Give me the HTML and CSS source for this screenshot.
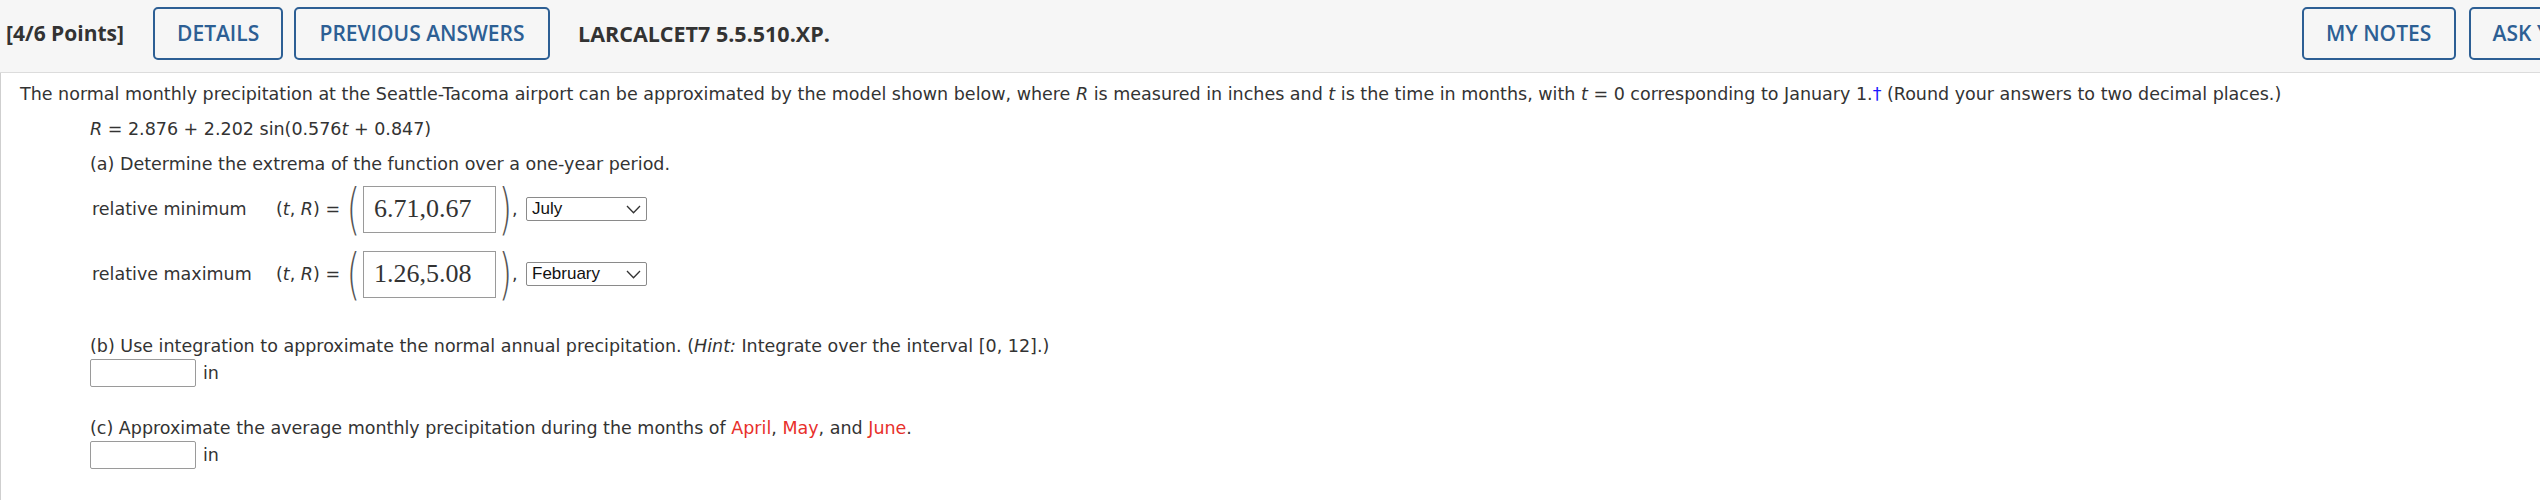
FILE: index.html
```html
<!DOCTYPE html>
<html>
<head>
<meta charset="utf-8">
<link rel="stylesheet" href="styles.css">
</head>
<body>
<div class="page">
  <header class="qhead">
    <span class="points">[4/6 Points]</span>
    <button class="btn btn-details">DETAILS</button>
    <button class="btn btn-prev">PREVIOUS ANSWERS</button>
    <span class="qid">LARCALCET7 5.5.510.XP.</span>
    <div class="right">
      <button class="btn">MY NOTES</button>
      <button class="btn">ASK YOUR TEACHER</button>
    </div>
  </header>
  <section class="qbody">
    <p class="intro">The normal monthly precipitation at the Seattle-Tacoma airport can be approximated by the model shown below, where <i>R</i> is measured in inches and <i>t</i> is the time in months, with <i>t</i> = 0 corresponding to January 1.<span class="dagger">†</span> (Round your answers to two decimal places.)</p>
    <div class="indent">
      <p class="line"><i>R</i> = 2.876 + 2.202 sin(0.576<i>t</i> + 0.847)</p>
      <p class="line">(a) Determine the extrema of the function over a one-year period.</p>
      <div class="extrema">
        <div class="row">
          <span class="label">relative minimum</span>
          <span class="eq">(<i>t</i>, <i>R</i>) =</span>
          <span class="paren">(</span>
          <span class="mathbox">6.71,0.67</span>
          <span class="paren">)</span>
          <span class="comma">,</span>
          <span class="select"><span class="sel-text">July</span><svg class="chev" width="15" height="9" viewBox="0 0 15 9"><path d="M1 1 L7.5 7.8 L14 1" fill="none" stroke="#333" stroke-width="1.3"/></svg></span>
        </div>
        <div class="row">
          <span class="label">relative maximum</span>
          <span class="eq">(<i>t</i>, <i>R</i>) =</span>
          <span class="paren">(</span>
          <span class="mathbox">1.26,5.08</span>
          <span class="paren">)</span>
          <span class="comma">,</span>
          <span class="select"><span class="sel-text">February</span><svg class="chev" width="15" height="9" viewBox="0 0 15 9"><path d="M1 1 L7.5 7.8 L14 1" fill="none" stroke="#333" stroke-width="1.3"/></svg></span>
        </div>
      </div>
      <p class="line part-b">(b) Use integration to approximate the normal annual precipitation. (<i>Hint:</i> Integrate over the interval [0, 12].)</p>
      <div class="answer"><span class="ansbox"></span><span class="unit">in</span></div>
      <p class="line part-c">(c) Approximate the average monthly precipitation during the months of <span class="red">April</span>, <span class="red">May</span>, and <span class="red">June</span>.</p>
      <div class="answer"><span class="ansbox"></span><span class="unit">in</span></div>
    </div>
  </section>
</div>
</body>
</html>
```
FILE: styles.css
```css
html, body {
  margin: 0;
  padding: 0;
  overflow: hidden;
  background: #ffffff;
}
.page {
  width: 2722px;
}
.qhead {
  display: flex;
  align-items: center;
  height: 73px;
  box-sizing: border-box;
  padding: 7px 6px 13px 6px;
  background: #f6f6f6;
  border-bottom: 1px solid #dcdcdc;
  font-family: "Open Sans", sans-serif;
  font-size: 21px;
}
.points {
  font-weight: 700;
  color: #333333;
  margin-right: 29px;
}
.btn {
  height: 53px;
  box-sizing: border-box;
  padding: 0 22px;
  border: 2px solid #2d5f94;
  border-radius: 5px;
  background: transparent;
  color: #2d5f94;
  font-family: "Open Sans", sans-serif;
  font-weight: 600;
  font-size: 21px;
}
.btn-details {
  width: 130px;
  margin-right: 11px;
}
.btn-prev {
  width: 256px;
  margin-right: 28px;
}
.qid {
  font-weight: 700;
  font-size: 21.5px;
  color: #333333;
}
.right {
  margin-left: auto;
  display: flex;
  gap: 13px;
}
.right .btn:first-child {
  width: 154px;
}
.qbody {
  border-left: 1px solid #cfcfcf;
  padding: 9px 0 0 19px;
  font-family: "DejaVu Sans", Verdana, sans-serif;
  font-size: 17.5px;
  line-height: 24px;
  color: #333333;
  height: 500px;
}
.qbody p {
  margin: 0 0 11px 0;
}
.dagger {
  color: #1a1aff;
}
.indent {
  margin-left: 70px;
}
.extrema {
  display: flex;
  flex-direction: column;
  gap: 15px;
  margin-top: -3px;
}
.row {
  display: flex;
  align-items: center;
  height: 50px;
  padding-left: 2px;
}
.label {
  width: 184px;
}
.eq {
  width: 68px;
}
.paren {
  font-family: "DejaVu Sans", sans-serif;
  font-weight: 200;
  font-size: 34px;
  line-height: 34px;
  display: inline-block;
  transform: scaleY(1.6);
  color: #555555;
  width: 19px;
  text-align: center;
}
.mathbox {
  box-sizing: border-box;
  width: 133px;
  height: 47px;
  border: 1px solid #9a9a9a;
  padding: 0 10px;
  display: flex;
  align-items: center;
  font-family: "Liberation Serif", serif;
  font-size: 26px;
  color: #333333;
}
.comma {
  width: 12px;
  margin-left: -3px;
  margin-right: 2px;
}
.select {
  box-sizing: border-box;
  width: 121px;
  height: 24px;
  border: 1px solid #8a8a8a;
  border-radius: 2px;
  display: flex;
  align-items: center;
  justify-content: space-between;
  padding: 0 5px 0 5px;
  font-family: "Liberation Sans", Arial, sans-serif;
  font-size: 17px;
  color: #111111;
}
.qbody p.part-b {
  margin-top: 35px;
  margin-bottom: 1px;
}
.qbody p.part-c {
  margin-top: 29px;
  margin-bottom: 1px;
}
.answer {
  display: flex;
  align-items: center;
  height: 28px;
}
.ansbox {
  box-sizing: border-box;
  width: 106px;
  height: 28px;
  border: 1px solid #9a9a9a;
  border-radius: 2px;
  margin-right: 7px;
}
.red {
  color: #e8302b;
}
```
